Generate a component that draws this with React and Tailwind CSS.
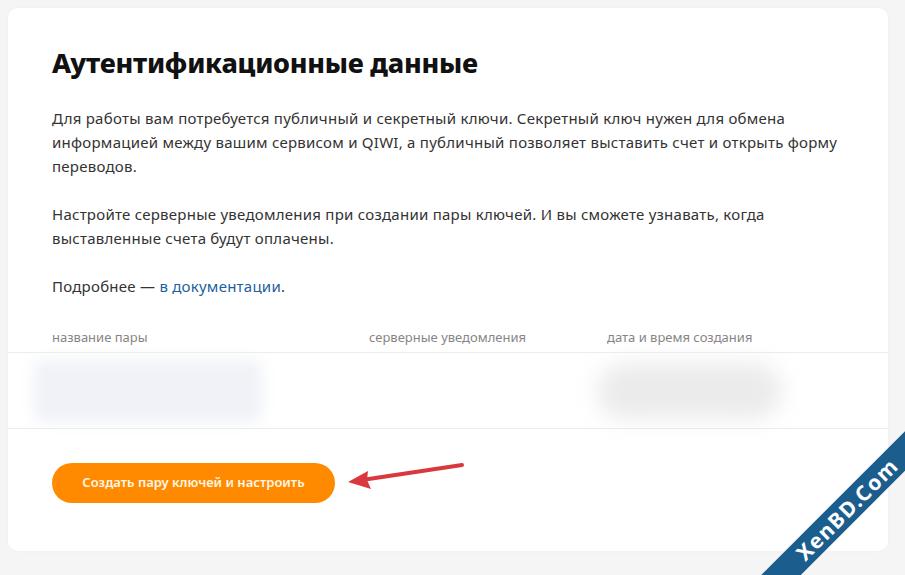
const paragraphs = [
  'Для работы вам потребуется публичный и секретный ключи. Секретный ключ нужен для обмена информацией между вашим сервисом и QIWI, а публичный позволяет выставить счет и открыть форму переводов.',
  'Настройте серверные уведомления при создании пары ключей. И вы сможете узнавать, когда выставленные счета будут оплачены.',
]

const columns = [
  { title: 'название пары', width: 'w-[317px]' },
  { title: 'серверные уведомления', width: 'w-[238px]' },
  { title: 'дата и время создания', width: 'flex-1' },
]

function Watermark() {
  return (
    <div className="pointer-events-none absolute left-[697px] top-[495px] flex h-[28px] w-[300px] -rotate-45 items-center justify-center bg-[#1b5d8c]">
      <span className="text-[21px] leading-none font-bold tracking-[1.5px] text-white">XenBD.Com</span>
    </div>
  )
}

function Arrow() {
  return (
    <svg className="pointer-events-none absolute left-[340px] top-[458px]" width="130" height="34" viewBox="0 0 130 34">
      <path d="M122 7 L22 22" stroke="#d9393e" strokeWidth="4" strokeLinecap="round" fill="none" />
      <path d="M8 24 L28 13 L27 22 L31 31 Z" fill="#d9393e" />
    </svg>
  )
}

export default function App() {
  return (
    <main className="relative h-[575px] w-[905px] overflow-hidden bg-[#f5f5f5] p-2 font-['Noto_Sans',sans-serif]">
      <section className="h-[543px] w-[880px] rounded-[10px] bg-white shadow-[0_0_4px_rgba(0,0,0,0.03)]">
        <div className="px-11 pt-[37px]">
          <h1 className="text-[27px] leading-9 font-extrabold tracking-[-0.25px] text-[#111]">Аутентификационные данные</h1>
          <div className="mt-[25px] space-y-6 text-[15px] leading-6 tracking-[0.25px] text-[#333]">
            {paragraphs.map((text) => (
              <p key={text} className="w-[800px]">{text}</p>
            ))}
            <p>
              Подробнее — <a className="text-[#1c5f9c]">в документации</a>.
            </p>
          </div>
        </div>

        <div className="mt-[29px]">
          <div className="flex px-11 pb-[5px] text-[13px] leading-5 text-[#858585]">
            {columns.map((col) => (
              <div key={col.title} className={col.width}>{col.title}</div>
            ))}
          </div>
          <div className="flex h-[77px] items-center border-y border-[#ececec]">
            <div className="ml-[26px] h-[62px] w-[228px] rounded-md bg-[#f0f2f7] blur-[7px]" />
            <div className="ml-[335px] h-[56px] w-[185px] rounded-full bg-[#ebebeb] blur-[11px]" />
          </div>
        </div>

        <div className="px-11 pt-[34px]">
          <button className="h-10 w-[283px] rounded-full bg-[#ff8a00] text-[13px] font-semibold text-[#fff6e6]">
            Создать пару ключей и настроить
          </button>
        </div>
      </section>
      <Arrow />
      <Watermark />
    </main>
  )
}
